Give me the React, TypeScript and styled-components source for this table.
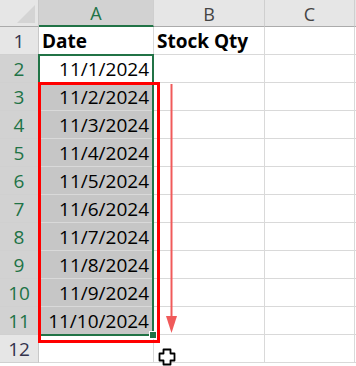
import styled, { createGlobalStyle } from 'styled-components'

const Global = createGlobalStyle`
  html, body {
    margin: 0;
    background: #ffffff;
  }
  body {
    font-family: 'Open Sans', 'Liberation Sans', sans-serif;
  }
`

const Sheet = styled.div`
  position: relative;
  width: 356px;
  height: 366px;
  overflow: hidden;
  display: grid;
  grid-template-columns: 39px 115px 111px 90px 1fr;
  grid-template-rows: 27px repeat(12, 28px);
`

const Corner = styled.div`
  background: #e6e6e6;
  border-right: 1px solid #c8c8c8;
  border-bottom: 1px solid #ababab;
  box-sizing: border-box;
  position: relative;
  &::after {
    content: '';
    position: absolute;
    right: 3px;
    bottom: 3px;
    border-style: solid;
    border-width: 0 0 18px 18px;
    border-color: transparent transparent #d4d4d4 transparent;
  }
`

const ColHead = styled.div<{ $sel?: boolean }>`
  box-sizing: border-box;
  background: ${(p) => (p.$sel ? '#d2d2d2' : '#e6e6e6')};
  border-right: 1px solid #cfcfcf;
  border-bottom: ${(p) => (p.$sel ? '2px solid #217346' : '1px solid #ababab')};
  color: ${(p) => (p.$sel ? '#217346' : '#444444')};
  font-size: 18px;
  display: flex;
  align-items: center;
  justify-content: center;
  padding-top: 1px;
`

const RowHead = styled.div<{ $sel?: boolean }>`
  box-sizing: border-box;
  background: ${(p) => (p.$sel ? '#d2d2d2' : '#e6e6e6')};
  border-right: 1px solid ${(p) => (p.$sel ? '#217346' : '#c8c8c8')};
  border-bottom: 1px solid #d0d0d0;
  color: ${(p) => (p.$sel ? '#217346' : '#33334d')};
  font-size: 19px;
  display: flex;
  align-items: center;
  justify-content: center;
`

const Cell = styled.div<{ $shade?: boolean; $bold?: boolean; $right?: boolean }>`
  box-sizing: border-box;
  background: ${(p) => (p.$shade ? '#c6c6c6' : '#ffffff')};
  border-right: 1px solid #d9d9d9;
  border-bottom: 1px solid #d9d9d9;
  color: #000000;
  font-size: 19px;
  font-weight: ${(p) => (p.$bold ? 700 : 500)};
  display: flex;
  align-items: center;
  justify-content: ${(p) => (p.$right ? 'flex-end' : 'flex-start')};
  padding: 1px 4px 0 3px;
  white-space: nowrap;
`

const Selection = styled.div`
  position: absolute;
  left: 38px;
  top: 54px;
  width: 116px;
  height: 282px;
  box-sizing: border-box;
  border: 2px solid #217346;
  pointer-events: none;
`

const Handle = styled.div`
  position: absolute;
  left: 149px;
  top: 331px;
  width: 6px;
  height: 6px;
  background: #217346;
  border: 1px solid #ffffff;
`

const RedBox = styled.div`
  position: absolute;
  left: 38px;
  top: 82px;
  width: 122px;
  height: 261px;
  box-sizing: border-box;
  border: 3px solid #ff0000;
`

const Overlay = styled.svg`
  position: absolute;
  left: 0;
  top: 0;
  pointer-events: none;
`

const dates = [
  '11/1/2024',
  '11/2/2024',
  '11/3/2024',
  '11/4/2024',
  '11/5/2024',
  '11/6/2024',
  '11/7/2024',
  '11/8/2024',
  '11/9/2024',
  '11/10/2024',
]

export default function App() {
  const rows = Array.from({ length: 12 }, (_, i) => i + 1)
  return (
    <>
      <Global />
      <Sheet>
        <Corner />
        <ColHead $sel>A</ColHead>
        <ColHead>B</ColHead>
        <ColHead>C</ColHead>
        <ColHead />
        {rows.map((r) => {
          const sel = r >= 2 && r <= 11
          return [
            <RowHead key={`h${r}`} $sel={sel}>
              {r}
            </RowHead>,
            <Cell
              key={`a${r}`}
              $shade={r >= 3 && r <= 11}
              $bold={r === 1}
              $right={r !== 1}
            >
              {r === 1 ? 'Date' : sel ? dates[r - 2] : ''}
            </Cell>,
            <Cell key={`b${r}`} $bold={r === 1}>
              {r === 1 ? 'Stock Qty' : ''}
            </Cell>,
            <Cell key={`c${r}`} />,
            <Cell key={`d${r}`} />,
          ]
        })}
        <Selection />
        <RedBox />
        <Handle />
        <Overlay width={356} height={366}>
          <line x1={171.5} y1={84} x2={171.5} y2={320} stroke="#f05a5a" strokeWidth={2} />
          <polygon points="166,316 177,316 171.5,333" fill="#f05a5a" />
          <path
            d="M163.5 349.5 h7 v4 h4 v7 h-4 v4 h-7 v-4 h-4 v-7 h4 z"
            fill="#ffffff"
            stroke="#000000"
            strokeWidth={1.8}
            strokeLinejoin="round"
          />
        </Overlay>
      </Sheet>
    </>
  )
}
